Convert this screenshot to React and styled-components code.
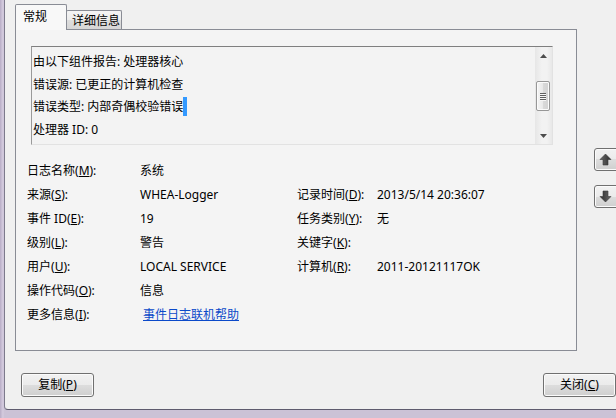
import React from "react";
import styled, { createGlobalStyle } from "styled-components";

const GlobalStyle = createGlobalStyle`
  html, body {
    margin: 0;
    padding: 0;
    background: #cbc2d6;
  }
  body {
    font-family: "Noto Sans", "Noto Sans CJK SC", sans-serif;
    font-size: 12px;
    color: #000;
  }
`;

const Frame = styled.div`
  width: 616px;
  height: 418px;
  overflow: hidden;
  box-sizing: border-box;
  padding: 0 0 8px 4px;
  background: linear-gradient(to right, #b8adc6 0px, #d6cde0 3px, #cbc2d6 4px);
`;

const Client = styled.div`
  width: 628px;
  height: 410px;
  box-sizing: border-box;
  background: #f0f0f0;
  border-left: 1px solid #7d7a8c;
  border-bottom: 1px solid #5e5b6e;
  border-bottom-left-radius: 4px;
  padding: 4px 0 0 10px;
  display: flex;
  flex-direction: column;
`;

const TopRow = styled.div`
  display: flex;
  align-items: flex-start;
`;

const TabArea = styled.div`
  width: 562px;
  display: flex;
  flex-direction: column;
`;

const TabStrip = styled.div`
  height: 25px;
  display: flex;
  align-items: flex-end;
`;

const Tab = styled.div`
  position: relative;
  box-sizing: border-box;
  border: 1px solid #898c95;
  border-bottom: none;
  border-radius: 2px 2px 0 0;
  display: flex;
  align-items: center;
  white-space: nowrap;
  ${(p) =>
    p.$active
      ? `
    z-index: 1;
    height: 26px;
    width: 52px;
    margin-bottom: -1px;
    padding: 0 0 4px 7px;
    background: #f8f8f8;
  `
      : `
    height: 19px;
    width: 56px;
    margin-left: -1px;
    padding: 0 0 0 5px;
    background: linear-gradient(#f4f4f4 0%, #ececec 50%, #dedede 50%, #d6d6d6 100%);
  `}
`;

const Panel = styled.div`
  box-sizing: border-box;
  height: 322px;
  border: 1px solid #898c95;
  background: #f4f4f4;
  display: flex;
  flex-direction: column;
`;

const TextBox = styled.div`
  box-sizing: border-box;
  width: 522px;
  height: 99px;
  margin: 16px 0 0 15px;
  border-top: 1px solid #7f7f7f;
  border-left: 1px solid #9a9a9a;
  border-right: 1px solid #e2e2e2;
  border-bottom: 1px solid #e2e2e2;
  background: #f3f3f3;
  display: flex;
`;

const TextLines = styled.div`
  flex: 1;
  padding: 4px 0 0 1px;
  line-height: 22.5px;
  overflow: hidden;
`;

const Line = styled.div`
  white-space: nowrap;
`;

const Caret = styled.span`
  display: inline-block;
  width: 4px;
  height: 19px;
  vertical-align: -5px;
  background: #3399ff;
`;

const ScrollBar = styled.div`
  width: 17px;
  display: flex;
  flex-direction: column;
  background: linear-gradient(to right, #e6e6e6, #f2f2f2 40%, #f2f2f2 70%, #e8e8e8);
`;

const ScrollArrow = styled.div`
  height: 17px;
  display: flex;
  align-items: center;
  justify-content: center;
`;

const Track = styled.div`
  height: ${(p) => p.$h}px;
`;

const Thumb = styled.div`
  box-sizing: border-box;
  height: 30px;
  width: 14px;
  margin-left: 1px;
  border: 1px solid #979797;
  border-radius: 2px;
  background: linear-gradient(to right, #f5f5f5, #e8e8e8 50%, #d9d9d9 51%, #d2d2d2);
  box-shadow: inset 0 0 0 1px #fbfbfb;
  display: flex;
  flex-direction: column;
  align-items: center;
  justify-content: center;
  gap: 1px;
`;

const Grip = styled.div`
  width: 6px;
  height: 1px;
  background: #5f5f5f;
  box-shadow: 0 1px 0 #f6f6f6;
`;

const Props = styled.div`
  margin: 13px 0 0 11px;
  display: grid;
  grid-template-columns: 113px 157px 80px 1fr;
  grid-auto-rows: 24px;
  align-items: center;
  white-space: nowrap;
`;

const Label = styled.div`
  grid-column: ${(p) => p.$col};
`;

const Value = styled.div`
  grid-column: ${(p) => p.$col};
`;

const Link = styled.a`
  color: #0b49c9;
  text-decoration: underline;
  margin-left: 3px;
  cursor: pointer;
`;

const SideButtons = styled.div`
  margin: 144px 0 0 17px;
  display: flex;
  flex-direction: column;
  gap: 14px;
`;

const winButton = `
  box-sizing: border-box;
  border: 1px solid #707070;
  border-radius: 3px;
  background: linear-gradient(#f2f2f2 0%, #ebebeb 50%, #dddddd 50%, #cfcfcf 100%);
  box-shadow: inset 0 0 0 1px #fbfbfb;
  display: flex;
  align-items: center;
  justify-content: center;
  font-family: inherit;
  font-size: 12px;
  color: #000;
`;

const ArrowButton = styled.div`
  ${winButton}
  width: 26px;
  height: 23px;
  justify-content: flex-start;
  padding-left: 4px;
`;

const Footer = styled.div`
  display: flex;
  justify-content: space-between;
  padding: 22px 16px 0 6px;
`;

const Button = styled.button`
  ${winButton}
  width: 73px;
  height: 24px;
  padding: 0 0 2px;
`;

const Key = ({ k }) => (
  <>
    (<u>{k}</u>):
  </>
);

const BigArrow = ({ down }) => (
  <svg width="13" height="13" viewBox="0 0 13 13" style={down ? { transform: "rotate(180deg)" } : undefined}>
    <defs>
      <linearGradient id={down ? "ga-d" : "ga-u"} x1="0" y1="0" x2="1" y2="0">
        <stop offset="0" stopColor="#6a6a6a" />
        <stop offset="1" stopColor="#2e2e2e" />
      </linearGradient>
    </defs>
    <path d="M6.5 1 L12 6.5 H9 V12 H4 V6.5 H1 Z" fill={`url(#${down ? "ga-d" : "ga-u"})`} stroke="#3a3a3a" strokeWidth="0.6" strokeLinejoin="round" />
  </svg>
);

const SmallArrow = ({ down }) => (
  <svg width="7" height="4" viewBox="0 0 7 4">
    <path d={down ? "M0 0 H7 L3.5 4 Z" : "M3.5 0 L7 4 H0 Z"} fill="#4d4d4d" />
  </svg>
);

const rows = [
  { l: "日志名称", k: "M", v: "系统" },
  { l: "来源", k: "S", v: "WHEA-Logger", l2: "记录时间", k2: "D", v2: "2013/5/14 20:36:07" },
  { l: "事件 ID", k: "E", v: "19", l2: "任务类别", k2: "Y", v2: "无" },
  { l: "级别", k: "L", v: "警告", l2: "关键字", k2: "K", v2: "" },
  { l: "用户", k: "U", v: "LOCAL SERVICE", l2: "计算机", k2: "R", v2: "2011-20121117OK" },
  { l: "操作代码", k: "O", v: "信息" },
  { l: "更多信息", k: "I", link: "事件日志联机帮助" },
];

export default function App() {
  return (
    <>
      <GlobalStyle />
      <Frame>
        <Client>
          <TopRow>
            <TabArea>
              <TabStrip>
                <Tab $active>常规</Tab>
                <Tab>详细信息</Tab>
              </TabStrip>
              <Panel>
                <TextBox>
                  <TextLines>
                    <Line>由以下组件报告: 处理器核心</Line>
                    <Line>错误源: 已更正的计算机检查</Line>
                    <Line>
                      错误类型: 内部奇偶校验错误
                      <Caret />
                    </Line>
                    <Line>处理器 ID: 0</Line>
                  </TextLines>
                  <ScrollBar>
                    <ScrollArrow>
                      <SmallArrow />
                    </ScrollArrow>
                    <Track $h={17} />
                    <Thumb>
                      <Grip />
                      <Grip />
                      <Grip />
                      <Grip />
                    </Thumb>
                    <Track $h={16} />
                    <ScrollArrow>
                      <SmallArrow down />
                    </ScrollArrow>
                  </ScrollBar>
                </TextBox>
                <Props>
                  {rows.map((r) => (
                    <React.Fragment key={r.l}>
                      <Label $col={1}>
                        {r.l}
                        <Key k={r.k} />
                      </Label>
                      <Value $col={2}>{r.link ? <Link>{r.link}</Link> : r.v}</Value>
                      {r.l2 && (
                        <>
                          <Label $col={3}>
                            {r.l2}
                            <Key k={r.k2} />
                          </Label>
                          <Value $col={4}>{r.v2}</Value>
                        </>
                      )}
                    </React.Fragment>
                  ))}
                </Props>
              </Panel>
            </TabArea>
            <SideButtons>
              <ArrowButton>
                <BigArrow />
              </ArrowButton>
              <ArrowButton>
                <BigArrow down />
              </ArrowButton>
            </SideButtons>
          </TopRow>
          <Footer>
            <Button>
              复制(<u>P</u>)
            </Button>
            <Button>
              关闭(<u>C</u>)
            </Button>
          </Footer>
        </Client>
      </Frame>
    </>
  );
}
